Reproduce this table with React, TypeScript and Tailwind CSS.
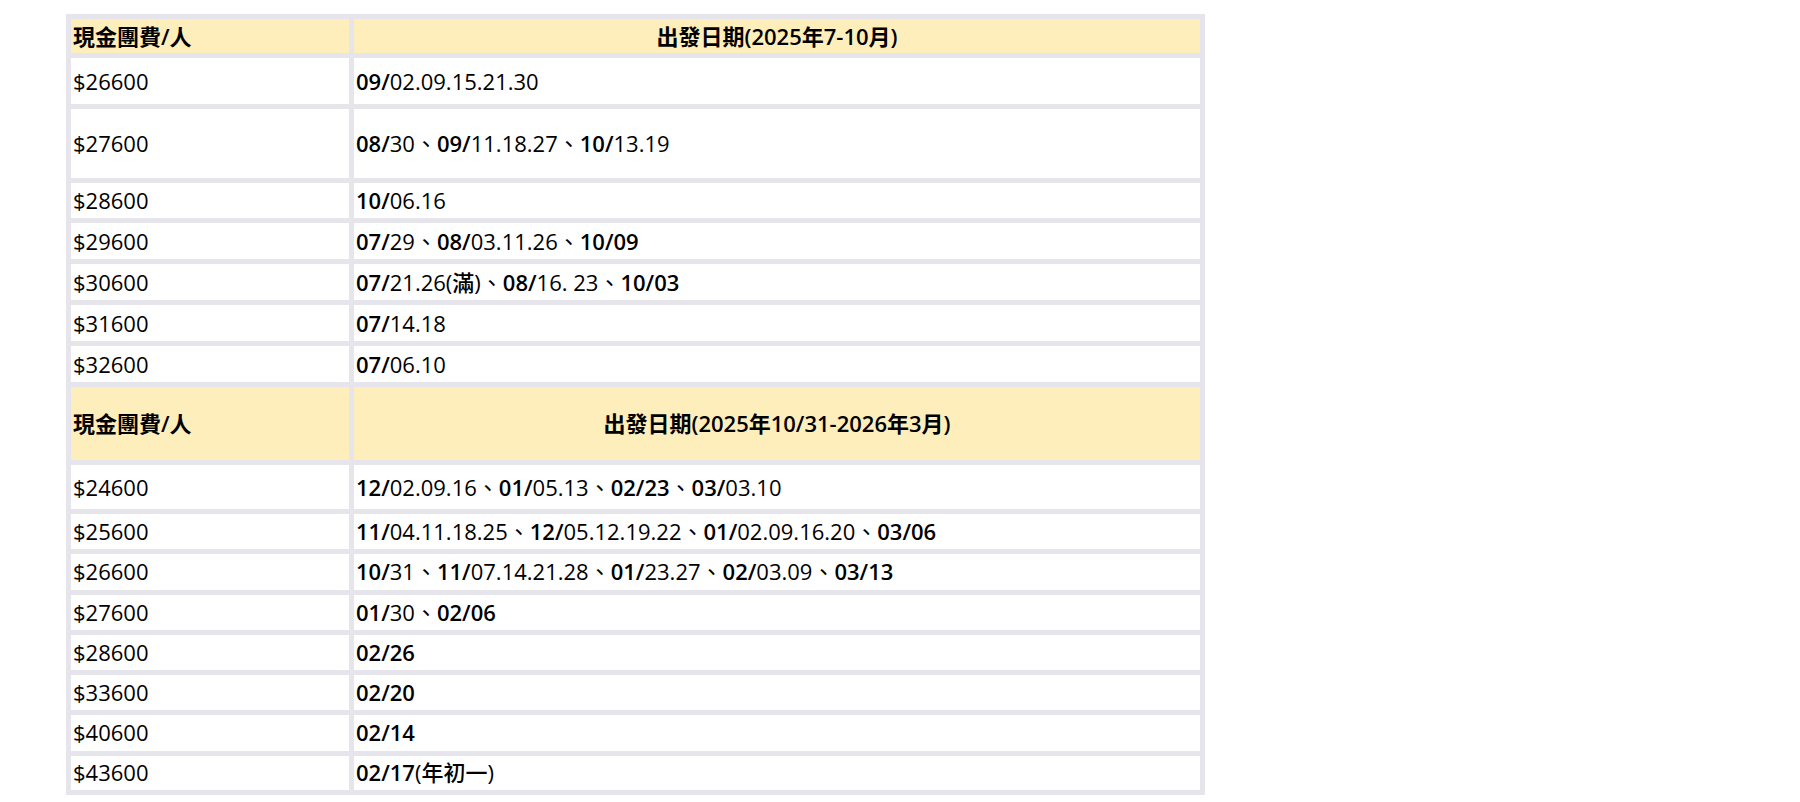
import React from "react";

type Row = { price: string; dates: string; h: string };

// Items prefixed with "!" are fully bold in the reference.
const sec1: Row[] = [
  { price: "$26600", dates: "09/02.09.15.21.30", h: "h-[46px]" },
  { price: "$27600", dates: "08/30、09/11.18.27、10/13.19", h: "h-[69px]" },
  { price: "$28600", dates: "10/06.16", h: "h-[35px]" },
  { price: "$29600", dates: "07/29、08/03.11.26、!10/09", h: "h-[36px]" },
  { price: "$30600", dates: "07/21.26(滿)、08/16. 23、!10/03", h: "h-[36px]" },
  { price: "$31600", dates: "07/14.18", h: "h-[36px]" },
  { price: "$32600", dates: "07/06.10", h: "h-[36px]" },
];

const sec2: Row[] = [
  { price: "$24600", dates: "12/02.09.16、01/05.13、!02/23、03/03.10", h: "h-[44px]" },
  { price: "$25600", dates: "11/04.11.18.25、12/05.12.19.22、01/02.09.16.20、!03/06", h: "h-[35px]" },
  { price: "$26600", dates: "10/31、11/07.14.21.28、01/23.27、02/03.09、!03/13", h: "h-[35.5px]" },
  { price: "$27600", dates: "01/30、!02/06", h: "h-[35px]" },
  { price: "$28600", dates: "!02/26", h: "h-[35.5px]" },
  { price: "$33600", dates: "!02/20", h: "h-[35px]" },
  { price: "$40600", dates: "!02/14", h: "h-[35.5px]" },
  { price: "$43600", dates: "!02/17|(年初一)", h: "h-[34px]" },
];

function Dates({ text }: { text: string }) {
  const items = text.split("、");
  return (
    <>
      {items.map((raw, i) => {
        const full = raw.startsWith("!");
        const it = full ? raw.slice(1) : raw;
        let boldPart: string;
        let rest: string;
        if (full) {
          const bar = it.indexOf("|");
          boldPart = bar >= 0 ? it.slice(0, bar) : it;
          rest = bar >= 0 ? it.slice(bar + 1) : "";
        } else {
          const idx = it.indexOf("/");
          boldPart = it.slice(0, idx + 1);
          rest = it.slice(idx + 1);
        }
        return (
          <React.Fragment key={i}>
            {i > 0 && <span className="font-normal">、</span>}
            <span className="font-semibold">{boldPart}</span>
            {rest && <span>{rest}</span>}
          </React.Fragment>
        );
      })}
    </>
  );
}

function Header({ title, h }: { title: string; h: string }) {
  return (
    <tr className={h}>
      <th className="bg-[#fdeebb] px-[2px] py-0 text-left font-semibold align-middle">現金團費/人</th>
      <th className="bg-[#fdeebb] px-[2px] py-0 text-center font-semibold align-middle">{title}</th>
    </tr>
  );
}

function Body({ rows }: { rows: Row[] }) {
  return (
    <>
      {rows.map((r, i) => (
        <tr key={i} className={r.h}>
          <td className="bg-white px-[2px] py-0 align-middle">{r.price}</td>
          <td className="bg-white px-[2px] py-0 align-middle whitespace-nowrap">
            <Dates text={r.dates} />
          </td>
        </tr>
      ))}
    </>
  );
}

export default function App() {
  return (
    <div
      className="min-h-[802px] w-full bg-white pl-[66px] pt-[14px] text-black text-[22px] leading-[1.3] font-medium"
      style={{ fontFamily: '"Open Sans", "Noto Sans CJK TC", sans-serif' }}
    >
      <table className="w-[1139px] table-fixed border-separate border-spacing-[5px] bg-[#e5e5eb]">
        <colgroup>
          <col className="w-[278px]" />
          <col className="w-[846px]" />
        </colgroup>
        <tbody>
          <Header title="出發日期(2025年7-10月)" h="h-[34px]" />
          <Body rows={sec1} />
          <Header title="出發日期(2025年10/31-2026年3月)" h="h-[73px]" />
          <Body rows={sec2} />
        </tbody>
      </table>
    </div>
  );
}
